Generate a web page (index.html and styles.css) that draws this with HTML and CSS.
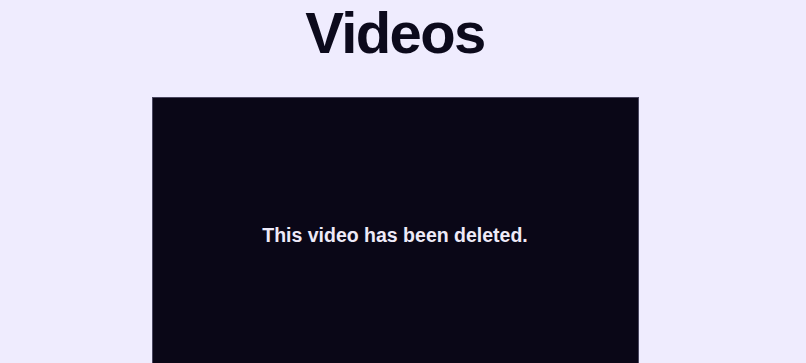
FILE: index.html
```html
<!DOCTYPE html>
<html lang="en">
<head>
    <meta charset="UTF-8">
    <title>Videos</title>
    <link rel="stylesheet" href="styles.css">
</head>
<body>
    <div class="page">
        <h1 class="title">Videos</h1>
        <div class="player">
            <p class="player-msg">This video has been deleted.</p>
        </div>
    </div>
</body>
</html>
```

FILE: styles.css
```css
body {
    margin: 0;
    background-color: #efecfe;
    font-family: 'Liberation Sans', Arial, sans-serif;
    color: #0c0a1c;
}

.page {
    width: 790px;
    display: flex;
    flex-direction: column;
    align-items: center;
}

.title {
    margin: 0;
    font-size: 58px;
    line-height: 66px;
    font-weight: 700;
    letter-spacing: -1.6px;
}

.player {
    margin-top: 31px;
    width: 487px;
    height: 273px;
    box-sizing: border-box;
    padding-top: 3px;
    background-color: #0a0717;
    border: 1px solid #4a4760;
    display: flex;
    align-items: center;
    justify-content: center;
}

.player-msg {
    margin: 0;
    color: #eeeaf8;
    font-size: 19.5px;
    font-weight: 700;
}
```
